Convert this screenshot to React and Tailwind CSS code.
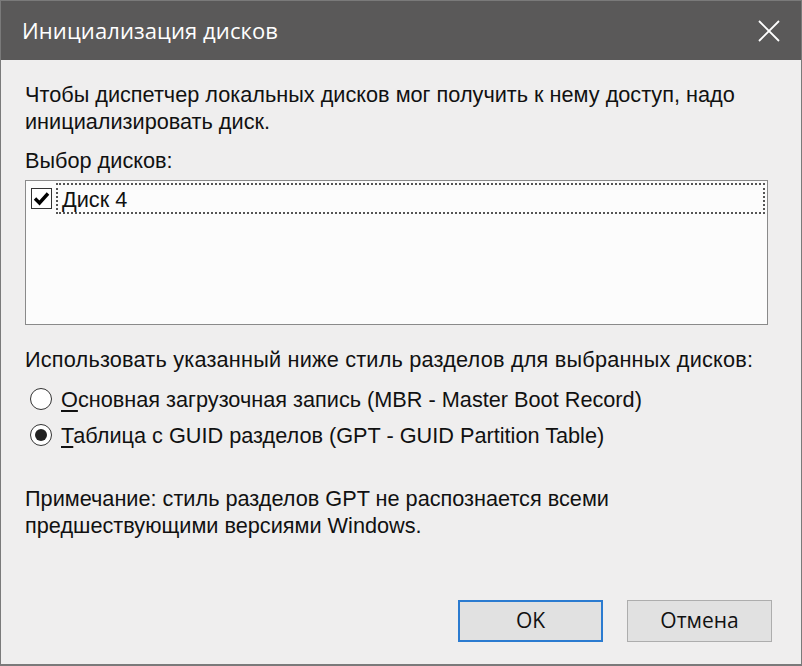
import React from "react";

export default function App() {
  return (
    <div className="w-[802px] h-[666px] bg-[#7a7a7a] p-[1px] pb-[2px]" style={{ fontFamily: '"Liberation Sans", Arial, sans-serif' }}>
      <div className="w-full h-full flex flex-col bg-[#efeeee]">
        <div className="h-[59px] bg-[#5a5959] flex items-center justify-between pl-[21px] pr-[18px] shrink-0">
          <span className="text-white text-[22px] tracking-[0.1px]" style={{ fontFamily: '"Open Sans", "Noto Sans", sans-serif' }}>
            Инициализация дисков
          </span>
          <svg width="24" height="24" viewBox="0 0 24 24" className="mr-[2px]">
            <path d="M2 2 L22 22 M22 2 L2 22" stroke="#fff" strokeWidth="1.8" />
          </svg>
        </div>
        <div className="flex flex-col px-[24px] pt-[21px] text-[21.7px] text-[#111] leading-[27px]">
          <div>Чтобы диспетчер локальных дисков мог получить к нему доступ, надо</div>
          <div>инициализировать диск.</div>
          <div className="mt-[12px]">Выбор дисков:</div>
          <div className="mt-[6px] w-[743px] h-[145px] border border-[#8a8a8a] bg-[#fcfcfc] p-[2px]">
            <div className="flex items-center h-[31px]">
              <div className="w-[21px] h-[21px] border border-[#333] bg-white flex items-center justify-center ml-[3px] shrink-0">
                <svg width="17" height="15" viewBox="0 0 17 15">
                  <path d="M2 7.5 L6.5 12 L15 2.5" stroke="#000" strokeWidth="3.4" fill="none" />
                </svg>
              </div>
              <div className="ml-[4px] flex-1 h-[31px] border-[2px] border-dotted border-[#555] flex items-center pl-[4px] pt-[2px]">
                Диск 4
              </div>
            </div>
          </div>
          <div className="mt-[21px] tracking-[0.2px]">Использовать указанный ниже стиль разделов для выбранных дисков:</div>
          <div className="mt-[8px] flex items-center h-[36px]">
            <div className="w-[22px] h-[22px] rounded-full border border-[#333] bg-white ml-[5px] shrink-0" />
            <span className="ml-[9px]"><span className="underline underline-offset-[3px]">О</span>сновная загрузочная запись (MBR - Master Boot Record)</span>
          </div>
          <div className="flex items-center h-[36px]">
            <div className="w-[22px] h-[22px] rounded-full border border-[#333] bg-white ml-[5px] shrink-0 flex items-center justify-center">
              <div className="w-[12px] h-[12px] rounded-full bg-[#222]" />
            </div>
            <span className="ml-[9px]"><span className="underline underline-offset-[3px]">Т</span>аблица с GUID разделов (GPT - GUID Partition Table)</span>
          </div>
          <div className="mt-[32px]">Примечание: стиль разделов GPT не распознается всеми</div>
          <div>предшествующими версиями Windows.</div>
        </div>
        <div className="flex-1 flex items-end justify-end pr-[29px] pb-[22px] gap-[24px]">
          <button className="w-[145px] h-[42px] border-[2px] border-[#2b7bd0] bg-[#e1e1e1] text-[21px] text-[#111]" style={{ fontFamily: '"Open Sans", "Noto Sans", sans-serif' }}>
            OK
          </button>
          <button className="w-[145px] h-[42px] border border-[#adadad] bg-[#e1e1e1] text-[21px] text-[#111]" style={{ fontFamily: '"Open Sans", "Noto Sans", sans-serif' }}>
            Отмена
          </button>
        </div>
      </div>
    </div>
  );
}
